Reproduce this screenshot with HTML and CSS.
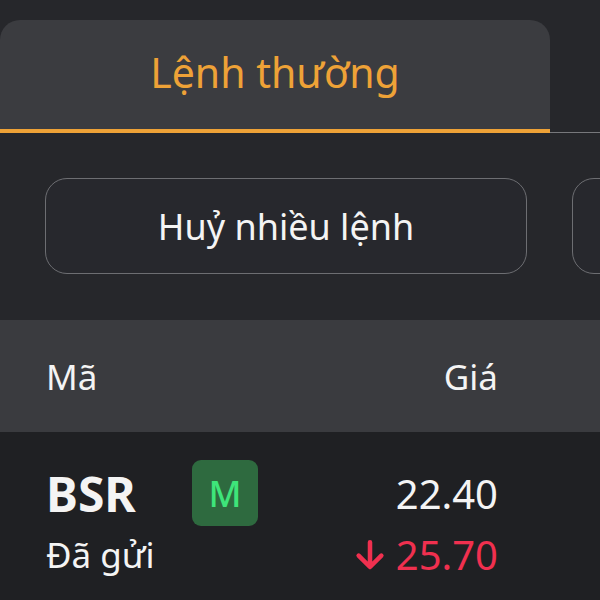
FILE: index.html
```html
<!DOCTYPE html>
<html lang="vi">
<head>
  <meta charset="UTF-8" />
  <meta name="viewport" content="width=device-width, initial-scale=1.0"/>
  <title>Sổ lệnh</title>
  <link rel="stylesheet" href="styles.css">
</head>
<body>
  <div class="tabs">
    <div class="tab active">Lệnh thường</div>
  </div>

  <div class="toolbar">
    <button class="btn">Huỷ nhiều lệnh</button>
    <button class="btn"></button>
  </div>

  <div class="table-head">
    <span>Mã</span>
    <span>Giá</span>
  </div>

  <div class="order-row">
    <div class="order-left">
      <div class="code">BSR</div>
      <div class="status">Đã gửi</div>
    </div>
    <div class="badge">M</div>
    <div class="order-right">
      <div class="price">22.40</div>
      <div class="market down">
        <svg class="arrow" viewBox="0 0 24 24" width="32" height="32">
          <path d="M12 2.5v18M3.5 12.5l8.5 8.5 8.5-8.5" fill="none" stroke="currentColor" stroke-width="3.4" stroke-linecap="round" stroke-linejoin="round"/>
        </svg>
        <span>25.70</span>
      </div>
    </div>
  </div>
</body>
</html>
```

FILE: styles.css
```css
html, body {
  margin: 0;
  height: 100%;
}
body {
  font-family: "Noto Sans", sans-serif;
  background-color: #26272b;
  color: #f4f4f4;
  overflow: hidden;
}

.tabs {
  display: flex;
  padding-top: 20px;
  border-bottom: 1px solid #77787c;
}
.tab {
  width: 550px;
  height: 113px;
  display: flex;
  align-items: center;
  justify-content: center;
  padding-bottom: 6px;
  box-sizing: border-box;
  font-size: 41px;
  background-color: #3b3c40;
  border-radius: 20px 20px 0 0;
  margin-bottom: -1px;
}
.tab.active {
  color: #eea237;
  border-bottom: 4px solid #eea237;
}

.toolbar {
  display: flex;
  gap: 45px;
  padding: 45px 0 46px 45px;
  overflow: hidden;
}
.btn {
  flex-shrink: 0;
  width: 482px;
  height: 96px;
  font-family: inherit;
  font-size: 36px;
  color: #f4f4f4;
  background-color: #27282d;
  border: 1.5px solid #6d6e72;
  border-radius: 22px;
}

.table-head {
  display: flex;
  justify-content: space-between;
  align-items: center;
  height: 112px;
  padding: 0 102px 0 46px;
  background-color: #3a3b3f;
  font-size: 35px;
}

.order-row {
  display: flex;
  align-items: flex-start;
  padding: 27px 102px 40px 46px;
  background-color: #1f2023;
  height: 200px;
}
.order-left {
  width: 146px;
}
.code {
  font-size: 48px;
  font-weight: 700;
  line-height: 70px;
}
.status {
  font-size: 35px;
  line-height: 52px;
}
.badge {
  width: 66px;
  height: 66px;
  margin-top: 1px;
  display: flex;
  align-items: center;
  justify-content: center;
  background-color: #2e6a3f;
  color: #3ee57a;
  border-radius: 9px;
  font-size: 36px;
  font-weight: 500;
}
.order-right {
  margin-left: auto;
  display: flex;
  flex-direction: column;
  align-items: flex-end;
}
.price {
  font-size: 40px;
  line-height: 70px;
}
.market {
  display: flex;
  align-items: center;
  gap: 10px;
  font-size: 40px;
  line-height: 52px;
}
.market.down {
  color: #f0304f;
}
```
